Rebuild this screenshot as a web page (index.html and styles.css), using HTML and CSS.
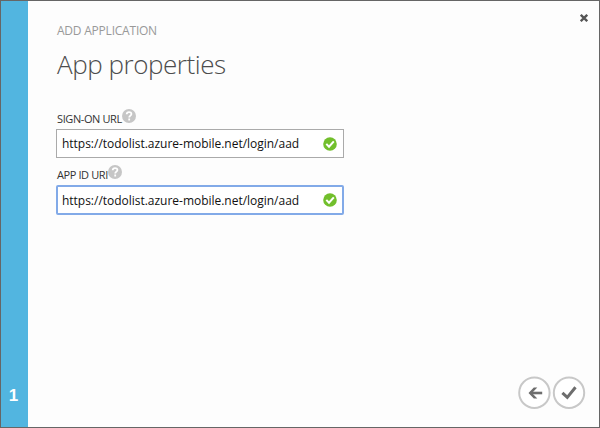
FILE: index.html
```html
<!DOCTYPE html>
<html lang="en">
<head>
<meta charset="utf-8">
<title>App properties</title>
<link rel="stylesheet" href="styles.css">
</head>
<body>
<div class="dialog">
  <aside class="step">1</aside>
  <main class="content">
    <p class="eyebrow">ADD APPLICATION</p>
    <h1 class="title">App properties</h1>
    <div class="field">
      <div class="label"><span class="label-text">SIGN-ON URL</span><svg class="help" viewBox="0 0 14 14"><circle cx="7" cy="7" r="7" fill="#c6c6c6"/><path d="M4.7 5.2C4.8 2.4 9.4 2.5 9.4 5C9.4 6.6 7.2 6.7 7.2 8.6M7.2 9.6V11.4" fill="none" stroke="#fff" stroke-width="1.8"/></svg></div>
      <div class="input"><span class="value">https://todolist.azure-mobile.net/login/aad</span><svg class="valid" viewBox="0 0 14 14"><circle cx="7" cy="7" r="6.8" fill="#72bf2c"/><path d="M3.3 6.9L6 9.7L10.8 4.3" fill="none" stroke="#fff" stroke-width="2"/></svg></div>
    </div>
    <div class="field">
      <div class="label"><span class="label-text">APP ID URI</span><svg class="help" viewBox="0 0 14 14"><circle cx="7" cy="7" r="7" fill="#c6c6c6"/><path d="M4.7 5.2C4.8 2.4 9.4 2.5 9.4 5C9.4 6.6 7.2 6.7 7.2 8.6M7.2 9.6V11.4" fill="none" stroke="#fff" stroke-width="1.8"/></svg></div>
      <div class="input focused"><span class="value">https://todolist.azure-mobile.net/login/aad</span><svg class="valid" viewBox="0 0 14 14"><circle cx="7" cy="7" r="6.8" fill="#72bf2c"/><path d="M3.3 6.9L6 9.7L10.8 4.3" fill="none" stroke="#fff" stroke-width="2"/></svg></div>
    </div>
    <div class="actions">
      <svg class="action" viewBox="0 0 34 34"><circle cx="17.4" cy="16.8" r="15.2" fill="#fff" stroke="#c8c8c8" stroke-width="2"/><path d="M25.2 17H13" fill="none" stroke="#6d6d6d" stroke-width="2.6"/><path d="M11.5 17L16.8 11.6H20.3L15 17L20.3 22.4H16.8Z" fill="#6d6d6d"/></svg>
      <svg class="action" viewBox="0 0 34 34"><circle cx="17" cy="16.8" r="15.2" fill="#fff" stroke="#c8c8c8" stroke-width="2"/><path d="M10.4 16.8L15.3 21.4L23.5 11.3" fill="none" stroke="#6d6d6d" stroke-width="3"/></svg>
    </div>
  </main>
  <svg class="close" viewBox="0 0 8 8"><path d="M.8.8L7.2 7.2M7.2.8L.8 7.2" fill="none" stroke="#555" stroke-width="2.3"/></svg>
</div>
</body>
</html>
```
FILE: styles.css
```css
* { box-sizing: border-box; }
body { margin: 0; font-family: "Open Sans", "Noto Sans", sans-serif; }
.dialog {
  position: relative;
  display: flex;
  height: 428px;
  border: 1px solid #666;
  background: #fdfdfd;
}
.step {
  display: flex;
  align-items: flex-end;
  justify-content: center;
  width: 27px;
  padding: 0 2px 20px 0;
  background: #52b5e0;
  color: #fff;
  font: bold 17px/22px "Liberation Sans", sans-serif;
}
.content {
  display: flex;
  flex: 1;
  flex-direction: column;
  padding: 22px 13px 17px 28px;
}
.eyebrow {
  margin: 0 0 0 1px;
  color: #999;
  font-size: 12px;
  line-height: 16px;
  letter-spacing: -0.22px;
}
.title {
  margin: 5px 0 0 1px;
  color: #4c4c4c;
  font-size: 26px;
  font-weight: 300;
  line-height: 40px;
  letter-spacing: -0.45px;
}
.title + .field { margin-top: 25px; }
.field { width: 288px; margin-bottom: 7px; }
.label {
  display: flex;
  height: 20px;
  padding-left: 1px;
  color: #333;
  font-size: 11px;
  line-height: 20px;
}
.label-text { letter-spacing: -0.4px; }
.help { width: 14px; height: 14px; }
.input {
  display: flex;
  align-items: center;
  justify-content: space-between;
  height: 29px;
  padding: 0 6px 0 5px;
  border: 1px solid #aaa;
  background: #fff;
  color: #111;
  font-size: 12px;
}
.value { letter-spacing: -0.02px; }
.focused {
  height: 30px;
  padding: 0 5px 0 4px;
  border: 2px solid #82aae8;
  border-radius: 2px;
}
.valid { width: 14px; height: 14px; }
.actions {
  display: flex;
  gap: 1px;
  justify-content: flex-end;
  margin-top: auto;
}
.action { width: 34px; height: 34px; }
.close {
  position: absolute;
  top: 13px;
  right: 11px;
  width: 8px;
  height: 8px;
}
```
